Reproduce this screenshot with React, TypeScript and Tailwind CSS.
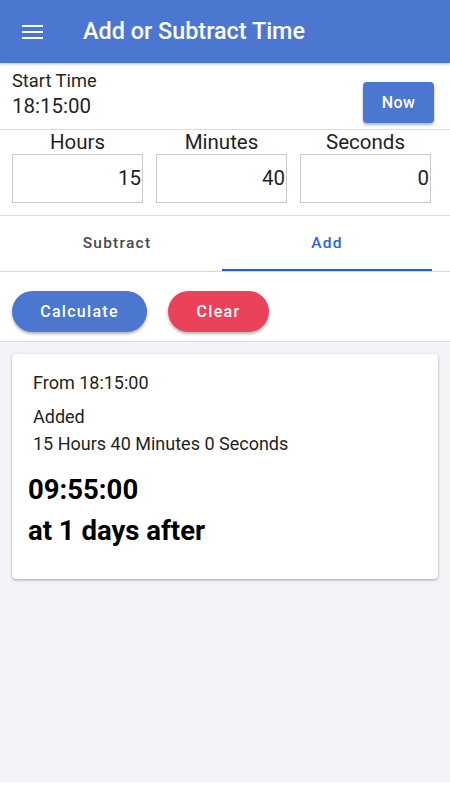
import React from "react";

const fields = [
  { label: "Hours", value: "15" },
  { label: "Minutes", value: "40" },
  { label: "Seconds", value: "0" },
];

export default function App() {
  return (
    <div className="w-[450px] h-[800px] bg-white flex flex-col font-['Roboto',sans-serif] text-[#1f1f1f]">
      <header className="h-[63px] shrink-0 bg-[#4b77d1] flex items-center shadow-[0_1px_3px_rgba(0,0,0,0.25)] relative z-10">
        <div className="ml-[22px] w-[21px] flex flex-col gap-[4px]">
          <span className="h-[2px] bg-white"></span>
          <span className="h-[2px] bg-white"></span>
          <span className="h-[2px] bg-white"></span>
        </div>
        <h1 className="ml-[40px] text-white text-[23.4px] font-medium">Add or Subtract Time</h1>
      </header>

      <section className="h-[67px] shrink-0 flex items-start justify-between pl-3 pr-4 border-b border-[#dcdcdc]">
        <div className="pt-[7px]">
          <div className="text-[18.3px] leading-[22px]">Start Time</div>
          <div className="text-[20.5px] leading-[29px]">18:15:00</div>
        </div>
        <button className="mt-[19px] w-[71px] h-[41px] rounded bg-[#4b77d1] text-white text-[16px] font-medium tracking-wide shadow-[0_2px_3px_rgba(0,0,0,0.3)]">
          Now
        </button>
      </section>

      <section className="h-[86px] shrink-0 pl-3 pr-[19px] pt-[1px] grid grid-cols-3 gap-[13px] border-b border-[#dcdcdc]">
        {fields.map((f) => (
          <div key={f.label} className="flex flex-col">
            <div className="text-center text-[20.5px] leading-[23px]">{f.label}</div>
            <div className="h-[49px] border border-[#c8c8c8] flex items-center justify-end pr-[1px] text-[20.5px]">
              {f.value}
            </div>
          </div>
        ))}
      </section>

      <nav className="h-[56px] shrink-0 flex border-b border-[#d6d6d6] pl-3 pr-[18px]">
        <div className="flex-1 flex items-center justify-center text-[15.5px] font-medium tracking-[0.08em] text-[#4a4a4a]">
          Subtract
        </div>
        <div className="flex-1 flex items-center justify-center text-[15.5px] font-medium tracking-[0.08em] text-[#2a63d4] border-b-2 border-[#1a5fd6] pt-[2px]">
          Add
        </div>
      </nav>

      <section className="h-[70px] shrink-0 flex items-start pt-[19px] gap-[21px] px-3 border-b border-[#dcdcdc]">
        <button className="w-[135px] h-[41px] rounded-full bg-[#4b77d1] text-white text-[16px] font-medium tracking-[0.08em] shadow-[0_2px_3px_rgba(0,0,0,0.3)]">
          Calculate
        </button>
        <button className="w-[101px] h-[41px] rounded-full bg-[#e9425a] text-white text-[16px] font-medium tracking-[0.08em] shadow-[0_2px_3px_rgba(0,0,0,0.3)]">
          Clear
        </button>
      </section>

      <main className="h-[440px] shrink-0 bg-[#f3f4f8] pt-3 px-3">
        <div className="h-[225px] bg-white rounded shadow-[0_1px_3px_rgba(0,0,0,0.35)] pt-[18px] pl-[21px]">
          <p className="text-[18px] leading-[22px]">From 18:15:00</p>
          <p className="mt-[12px] text-[18px] leading-[22px]">Added</p>
          <p className="mt-[5px] text-[18px] leading-[22px]">15 Hours 40 Minutes 0 Seconds</p>
          <p className="mt-[18px] -ml-[5px] text-[27.5px] leading-[34px] font-bold text-black">09:55:00</p>
          <p className="mt-[7px] -ml-[5px] text-[27.5px] leading-[34px] font-bold text-black">at 1 days after</p>
        </div>
      </main>
    </div>
  );
}
